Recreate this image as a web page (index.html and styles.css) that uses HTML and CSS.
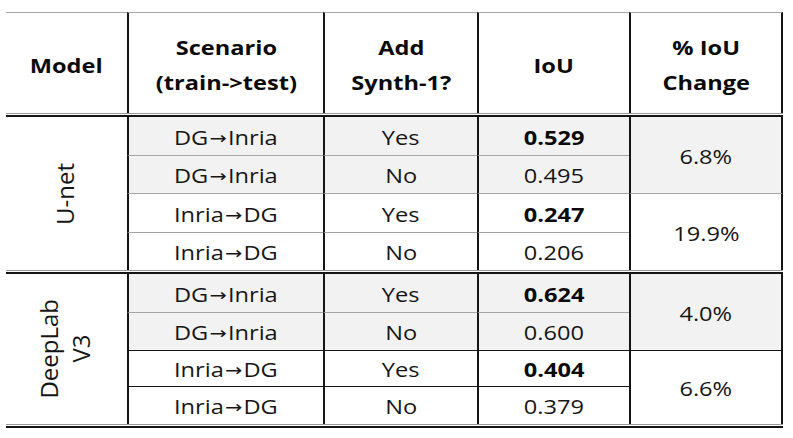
FILE: index.html
```html
<!DOCTYPE html>
<html>
<head>
<meta charset="utf-8">
<link rel="stylesheet" href="styles.css">
</head>
<body>
<div class="tbl">
  <div class="c h first"><span class="t">Model</span></div>
  <div class="c h"><span class="t">Scenario<br>(train-&gt;test)</span></div>
  <div class="c h"><span class="t">Add<br>Synth-1?</span></div>
  <div class="c h"><span class="t">IoU</span></div>
  <div class="c h last"><span class="t">% IoU<br>Change</span></div>

  <div class="rule"></div>

  <div class="c model m1"><span class="rot">U-net</span></div>
  <div class="c g bl"><span class="t">DG<span class="ar">→</span>Inria</span></div>
  <div class="c g bl"><span class="t">Yes</span></div>
  <div class="c g bl"><span class="t"><b>0.529</b></span></div>
  <div class="c g pct p1 bl"><span class="t">6.8%</span></div>

  <div class="c g bl"><span class="t">DG<span class="ar">→</span>Inria</span></div>
  <div class="c g bl"><span class="t">No</span></div>
  <div class="c g bl"><span class="t">0.495</span></div>

  <div class="c bl"><span class="t">Inria<span class="ar">→</span>DG</span></div>
  <div class="c bl"><span class="t">Yes</span></div>
  <div class="c bl"><span class="t"><b>0.247</b></span></div>
  <div class="c pct p2 nb"><span class="t">19.9%</span></div>

  <div class="c nb"><span class="t">Inria<span class="ar">→</span>DG</span></div>
  <div class="c nb"><span class="t">No</span></div>
  <div class="c nb"><span class="t">0.206</span></div>

  <div class="rule r2"></div>

  <div class="c model m2"><span class="rot">DeepLab<br>V3</span></div>
  <div class="c g bl"><span class="t">DG<span class="ar">→</span>Inria</span></div>
  <div class="c g bl"><span class="t">Yes</span></div>
  <div class="c g bl"><span class="t"><b>0.624</b></span></div>
  <div class="c g pct p3 bk"><span class="t">4.0%</span></div>

  <div class="c g bk"><span class="t">DG<span class="ar">→</span>Inria</span></div>
  <div class="c g bk"><span class="t">No</span></div>
  <div class="c g bk"><span class="t">0.600</span></div>

  <div class="c bk"><span class="t">Inria<span class="ar">→</span>DG</span></div>
  <div class="c bk"><span class="t">Yes</span></div>
  <div class="c bk"><span class="t"><b>0.404</b></span></div>
  <div class="c pct p4 nb"><span class="t">6.6%</span></div>

  <div class="c nb"><span class="t">Inria<span class="ar">→</span>DG</span></div>
  <div class="c nb"><span class="t">No</span></div>
  <div class="c nb"><span class="t">0.379</span></div>

  <div class="rule r3"></div>
</div>
</body>
</html>
```

FILE: styles.css
```css
* { box-sizing: border-box; }
html, body { margin: 0; padding: 0; background: #fff; }
body {
  font-family: "Open Sans", "Liberation Sans", "DejaVu Sans", sans-serif;
  font-size: 19.5px;
  color: #161616;
}
.tbl {
  margin: 12px 0 0 6px;
  width: 777px;
  display: grid;
  grid-template-columns: 121px 196px 154px 152px 154px;
  grid-template-rows: 101px 4px 39px 38px 39px 37px 4px 39px 38px 36px 37px 4px;
}
.c {
  display: flex;
  align-items: center;
  justify-content: center;
  text-align: center;
  border-left: 2px solid #151515;
  background: #fff;
  padding-top: 2px;
}
.t {
  display: inline-block;
  white-space: nowrap;
  transform: scaleX(1.21);
}
.ar {
  font-family: "DejaVu Sans", sans-serif;
  font-size: 17px;
  font-weight: 400;
  margin: 0 1px;
  position: relative;
  top: -1px;
}
.c b { font-weight: 700; color: #0a0a0a; }
.h {
  font-weight: 700;
  color: #0a0a0a;
  line-height: 35px;
  border-top: 1px solid #a8a8a8;
  padding-top: 4px;
}
.h.first { border-left: none; }
.last, .pct { border-right: 2px solid #151515; }
.g { background: #f2f2f2; }
.bl { border-bottom: 1px solid #a4a4a4; }
.bk { border-bottom: 1px solid #151515; }
.nb { border-bottom: none; }
.rule {
  grid-column: 1 / -1;
  border-top: 1px solid #9a9a9a;
  border-bottom: 2px solid #151515;
  background: #fff;
}
.model {
  border-left: none;
  grid-column: 1;
  padding-top: 0;
  padding-right: 3px;
}
.m1 { grid-row: 3 / 7; }
.m2 { grid-row: 8 / 12; }
.p1 { grid-column: 5; grid-row: 3 / 5; }
.p2 { grid-column: 5; grid-row: 5 / 7; }
.p3 { grid-column: 5; grid-row: 8 / 10; }
.p4 { grid-column: 5; grid-row: 10 / 12; }
.rot {
  writing-mode: vertical-rl;
  transform: rotate(180deg);
  font-size: 24px;
  line-height: 32px;
}
```
